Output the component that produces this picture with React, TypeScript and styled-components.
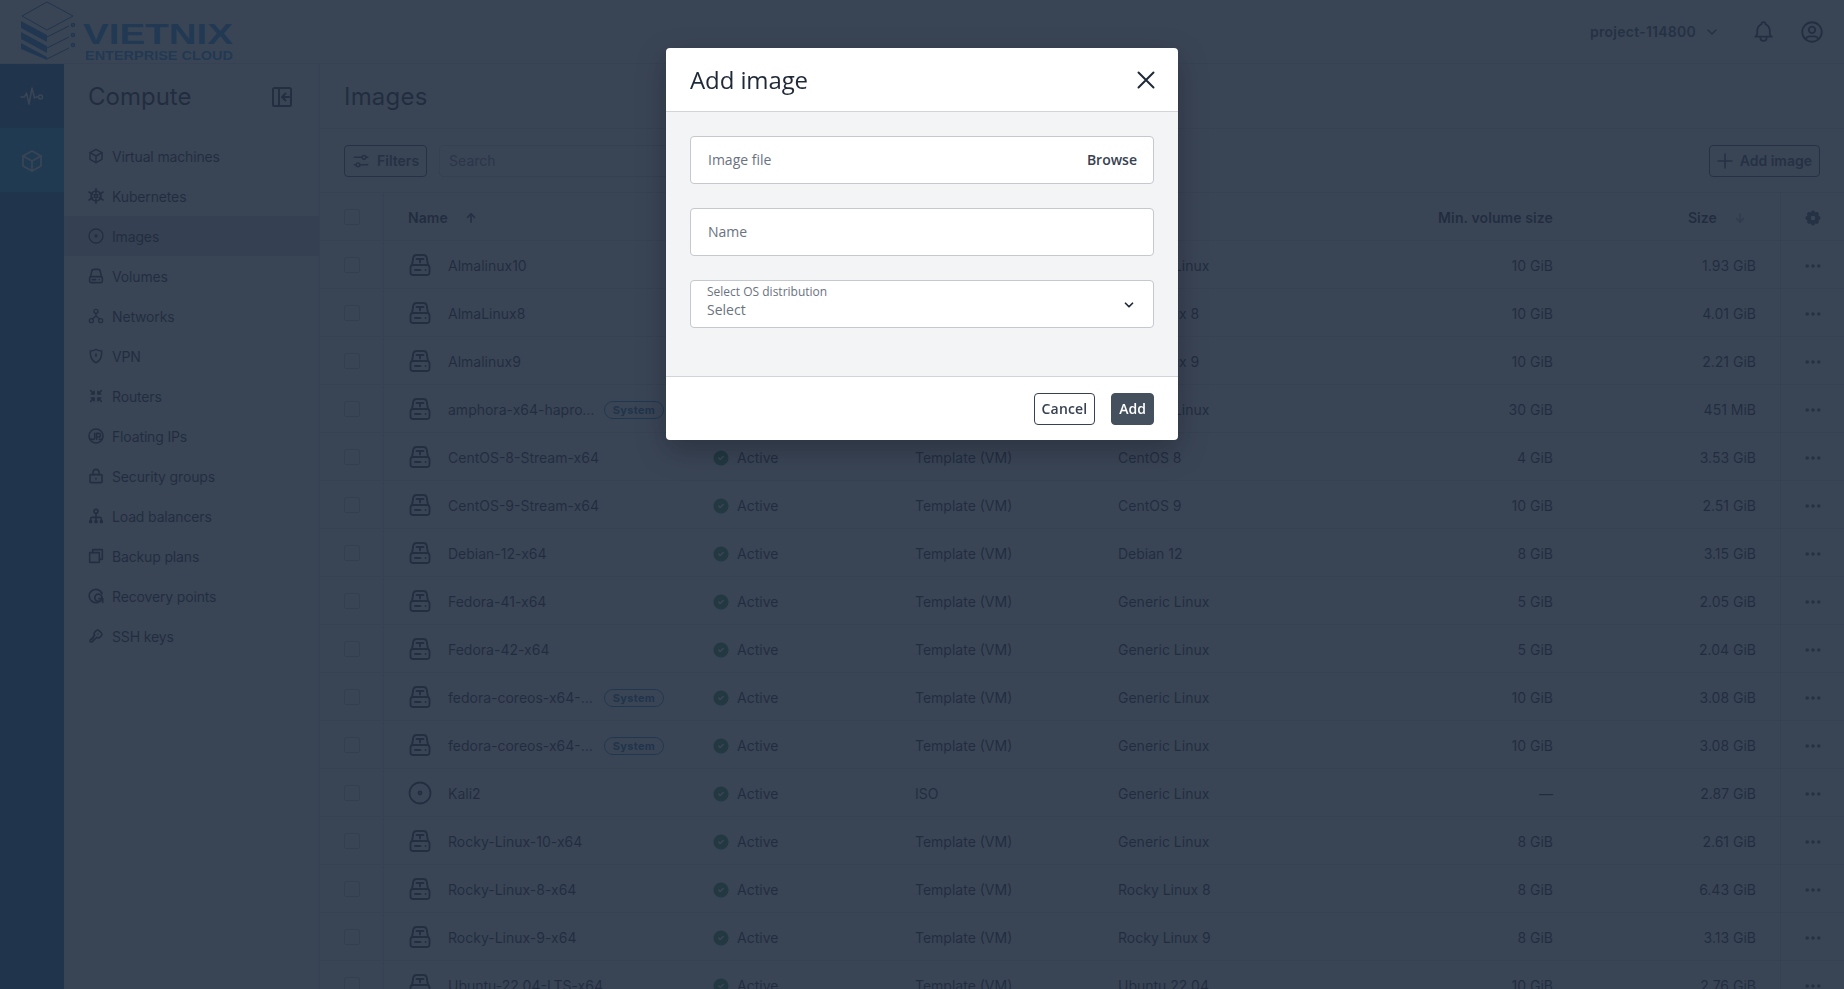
import React from "react";
import styled, { createGlobalStyle } from "styled-components";
import {
  TbArrowDown,
  TbArrowUp,
  TbBell,
  TbChevronDown,
  TbCircleCheckFilled,
  TbDots,
  TbKey,
  TbSettingsFilled,
  TbUserCircle,
} from "react-icons/tb";

const GlobalStyle = createGlobalStyle`
  html, body {
    margin: 0;
    padding: 0;
    height: 100%;
    overflow: hidden;
    background: #fff;
  }
  * {
    box-sizing: border-box;
  }
`;

const Page = styled.div`
  width: 1844px;
  height: 989px;
  overflow: hidden;
  display: flex;
  flex-direction: column;
  font-family: Inter, "Liberation Sans", sans-serif;
  font-size: 14px;
  color: #111827;
`;

// top bar
const TopBar = styled.header`
  height: 64px;
  flex: none;
  display: flex;
  align-items: center;
  justify-content: space-between;
  border-bottom: 1px solid #dfe2e7;
  padding: 0 19px 0 20px;
`;

const Logo = styled.svg`
  width: 216px;
  height: 63px;
  display: block;
`;

const TopActions = styled.div`
  display: flex;
  align-items: center;
  color: #1f2937;
  svg {
    display: block;
  }
`;

const Project = styled.div`
  display: flex;
  align-items: center;
  font-weight: 600;
  letter-spacing: 0.25px;
  gap: 8px;
  margin-right: 31px;
  color: #374151;
`;

const BellWrap = styled.div`
  margin-right: 23px;
`;

const Body = styled.div`
  flex: 1;
  display: flex;
  min-height: 0;
`;

// left rail
const Rail = styled.nav`
  width: 64px;
  flex: none;
  background: #00649a;
`;

const RailItem = styled.div<{ $active?: boolean }>`
  height: 64px;
  display: flex;
  align-items: center;
  justify-content: center;
  padding-top: 2px;
  background: ${(p) => (p.$active ? "#0098e0" : "transparent")};
  color: #fff;
`;

// section nav
const SideNav = styled.aside`
  width: 256px;
  flex: none;
  border-right: 1px solid #dfe2e7;
`;

const SideHead = styled.div`
  height: 64px;
  display: flex;
  align-items: center;
  justify-content: space-between;
  padding: 0 25px 0 24px;
  margin-bottom: 8px;
  color: #1f2937;
  svg {
    margin-top: 2px;
  }
`;

const SideTitle = styled.h2`
  margin: 0;
  font-size: 24px;
  font-weight: 400;
  color: #111827;
`;

const NavItem = styled.div<{ $active?: boolean }>`
  height: 40px;
  display: flex;
  align-items: center;
  gap: 8px;
  padding-left: 24px;
  background: ${(p) => (p.$active ? "#d4d7dc" : "transparent")};
  color: #111827;
  letter-spacing: -0.15px;
  svg {
    color: #1f2937;
  }
`;

// main area
const Main = styled.main`
  flex: 1;
  min-width: 0;
`;

const TitleBar = styled.div`
  height: 65px;
  display: flex;
  align-items: center;
  padding-left: 24px;
  border-bottom: 1px solid #dfe2e7;
`;

const PageTitle = styled.h1`
  margin: 0;
  font-size: 24px;
  font-weight: 400;
  letter-spacing: 0.2px;
`;

const Toolbar = styled.div`
  display: flex;
  align-items: center;
  padding: 16px 24px 15px;
  gap: 12px;
`;

const OutlineButton = styled.button<{ $gap?: number }>`
  height: 32px;
  display: flex;
  align-items: center;
  gap: ${(p) => p.$gap ?? 6}px;
  padding: 0 7px 1px;
  background: transparent;
  border: 1px solid #374151;
  border-radius: 4px;
  color: #374151;
  font: 600 14px Inter, "Liberation Sans", sans-serif;
`;

const SearchBox = styled.div`
  width: 320px;
  height: 32px;
  display: flex;
  align-items: center;
  padding: 0 0 2px 9px;
  border: 1px solid #d1d5db;
  border-radius: 4px;
  color: #6b7280;
`;

const Spacer = styled.div`
  flex: 1;
`;

// table
const columns = "64px 305px 202px 203px 280px 203px 203px 64px";

const HeadRow = styled.div`
  display: grid;
  grid-template-columns: ${columns};
  height: 49px;
  border-top: 1px solid #dfe2e7;
  border-bottom: 1px solid #dfe2e7;
  font-weight: 600;
  letter-spacing: 0.1px;
  color: #111827;
`;

const Row = styled.div`
  display: grid;
  grid-template-columns: ${columns};
  height: 48px;
  border-bottom: 1px solid #dfe2e7;
`;

const Cell = styled.div<{ $right?: boolean; $pad?: number }>`
  display: flex;
  align-items: center;
  min-width: 0;
  justify-content: ${(p) => (p.$right ? "flex-end" : "flex-start")};
  padding: 2px ${(p) => p.$pad ?? 24}px 0;
`;

const CheckCell = styled(Cell)`
  padding: 0 0 0 24px;
  border-right: 1px solid #dfe2e7;
`;

const ActionCell = styled(Cell)`
  padding: 2px 0 0;
  justify-content: center;
  border-left: 1px solid #dfe2e7;
  color: #374151;
`;

const Check = styled.span`
  width: 16px;
  height: 16px;
  border: 1px solid #c3c8d0;
  border-radius: 2px;
`;

const NameIcon = styled.span`
  display: flex;
  flex: none;
  width: 24px;
  margin-top: -2px;
  margin-right: 16px;
  color: #1f2937;
`;

const NameText = styled.span<{ $clip?: boolean }>`
  white-space: nowrap;
  overflow: hidden;
  text-overflow: ellipsis;
  width: ${(p) => (p.$clip ? "149px" : "auto")};
`;

const Badge = styled.span`
  flex: none;
  margin-left: 7px;
  width: 60px;
  height: 18px;
  display: flex;
  align-items: center;
  justify-content: center;
  border: 1px solid #0a7fd0;
  border-radius: 9px;
  color: #075a9e;
  font-size: 11px;
  font-weight: 700;
  letter-spacing: 0.3px;
`;

const StatusIcon = styled.span`
  display: flex;
  margin-left: -1px;
  margin-right: 7px;
  color: #188a40;
`;

const SortGap = styled.span<{ $faint?: boolean }>`
  display: flex;
  margin-left: 16px;
  color: ${(p) => (p.$faint ? "#9ca3af" : "#374151")};
`;

// dialog
const Overlay = styled.div`
  position: fixed;
  inset: 0;
  background: rgba(36, 48, 67, 0.9);
  font-family: "Open Sans", "Noto Sans", sans-serif;
`;

const Dialog = styled.section`
  width: 512px;
  height: 392px;
  margin: 48px auto 0;
  display: flex;
  flex-direction: column;
  background: #fff;
  border-radius: 4px;
  box-shadow: 0 10px 30px rgba(0, 0, 0, 0.25);
  overflow: hidden;
`;

const DialogHead = styled.div`
  height: 64px;
  flex: none;
  display: flex;
  align-items: center;
  justify-content: space-between;
  padding: 0 20px 0 24px;
  border-bottom: 1px solid #d1d5db;
`;

const DialogTitle = styled.h3`
  margin: 0;
  font-size: 24px;
  font-weight: 400;
  letter-spacing: -0.1px;
  color: #1f2937;
`;

const CloseIcon = styled.span`
  display: flex;
  color: #1f2937;
`;

const DialogBody = styled.div`
  flex: 1;
  background: #f3f4f6;
  padding: 24px;
  display: flex;
  flex-direction: column;
  gap: 24px;
`;

const Field = styled.div`
  height: 48px;
  display: flex;
  align-items: center;
  justify-content: space-between;
  padding: 0 16px 2px 17px;
  background: #fff;
  border: 1px solid #c4c8cf;
  border-radius: 4px;
  font-size: 14px;
  color: #6b7280;
`;

const Browse = styled.span`
  font-weight: 600;
  color: #374151;
`;

const SelectText = styled.div`
  display: flex;
  flex-direction: column;
  line-height: 19px;
  margin: -4px 0 0 -1px;
  color: #6b7280;
  small {
    font-size: 12px;
    line-height: 16px;
    color: #6b7280;
  }
`;

const SelectChevron = styled.span`
  display: flex;
  margin: 3px 1px 0 0;
  color: #1f2937;
`;

const DialogFoot = styled.div`
  height: 64px;
  flex: none;
  display: flex;
  align-items: center;
  justify-content: flex-end;
  gap: 16px;
  padding: 0 24px;
  border-top: 1px solid #d1d5db;
`;

const FootButton = styled.button<{ $primary?: boolean }>`
  height: 32px;
  padding: 0 7px;
  border-radius: 4px;
  border: 1px solid ${(p) => (p.$primary ? "#45505e" : "#374151")};
  background: ${(p) => (p.$primary ? "#45505e" : "#fff")};
  color: ${(p) => (p.$primary ? "#fff" : "#374151")};
  font: 600 14px "Open Sans", "Noto Sans", sans-serif;
  letter-spacing: ${(p) => (p.$primary ? "0" : "0.15px")};
`;

const Svg: React.FC<{ size?: number; width?: number; children: React.ReactNode }> = ({ size = 16, width = 2, children }) => (
  <svg width={size} height={size} viewBox="0 0 24 24" fill="none" stroke="currentColor" strokeWidth={width} strokeLinecap="round" strokeLinejoin="round">
    {children}
  </svg>
);

const HeartbeatIcon = () => (
  <Svg size={24} width={1.5}>
    <path d="M1 12h3.5l2-4 2.5 11 3-16 2.5 10 1.5-1h2.5" />
    <circle cx="20.5" cy="12" r="2" />
  </Svg>
);
const BoxIcon = ({ size = 16, width = 2.2 }: { size?: number; width?: number }) => (
  <Svg size={size} width={width}>
    <path d="M12 2l9 5v10l-9 5-9-5V7z" />
    <path d="M3 7l9 5 9-5M12 12v10" />
  </Svg>
);
const HelmIcon = () => (
  <Svg width={2.4}>
    <circle cx="12" cy="12" r="7.5" />
    <circle cx="12" cy="12" r="2.5" />
    <path d="M12 1v6M12 17v6M1.5 6l5.5 3.5M17 14.5l5.5 3.5M1.5 18l5.5-3.5M17 9.500l5.500-3.500" />
  </Svg>
);
const DiscIcon = ({ size = 16, width = 2 }: { size?: number; width?: number }) => (
  <Svg size={size} width={width}>
    <circle cx="12" cy="12" r="10.500" />
    <circle cx="12" cy="12" r="1.500" />
  </Svg>
);
const VolumeIcon = () => (
  <Svg width={2.4}>
    <path d="M4 13l1.500-8a3.500 3.500 0 0 1 3.500-3h6a3.500 3.500 0 0 1 3.500 3l1.500 8" />
    <rect x="2.500" y="13" width="19" height="9" rx="2" />
    <path d="M6.500 17.500h5M17 17.500h.01" />
  </Svg>
);
const TemplateIcon = () => (
  <Svg size={24} width={1.9}>
    <path d="M4 12l1.300-7.500A3 3 0 0 1 8.200 2h7.600a3 3 0 0 1 2.900 2.500L20 12" />
    <rect x="2.500" y="12" width="19" height="10" rx="2.500" />
    <path d="M8.500 6h7M12 6v3.500M7 17h5.500M17.500 17h.01" />
  </Svg>
);
const NetworkIcon = () => (
  <Svg width={2}>
    <circle cx="12" cy="5" r="3" />
    <circle cx="5" cy="19" r="3" />
    <circle cx="19" cy="19" r="3" />
    <path d="M12 8v4l-5.500 4.500M12 12l5.500 4.500" />
  </Svg>
);
const ShieldIcon = () => (
  <Svg width={2.4}>
    <path d="M12 2c3 1.800 5.500 2.500 8.500 2.500C21 13 18 19.500 12 22 6 19.500 3 13 3.500 4.500 6.500 4.500 9 3.800 12 2z" />
    <path d="M12 9v3.500" />
  </Svg>
);
const RouterIcon = () => (
  <Svg width={2.6}>
    <path d="M4 4l5 5M9 5v4H5M20 4l-5 5M15 5v4h4M4 20l5-5M9 19v-4H5M20 20l-5-5M15 19v-4h4" />
  </Svg>
);
const FloatingIcon = () => (
  <Svg width={2.4}>
    <circle cx="12" cy="12" r="10.500" />
    <path d="M3 17c2-1 4 1 6 0s1-3 1-9M13 17V8h3a2.500 2.500 0 0 1 0 5.500h-3M17 17c1 .5 2 .5 4-.5" />
  </Svg>
);
const LockIcon = () => (
  <Svg width={2.4}>
    <path d="M7.500 10V6.500a4.500 4.500 0 0 1 9 0V10" />
    <rect x="3" y="10" width="18" height="12" rx="1" />
    <path d="M12 15.500v1" />
  </Svg>
);
const BalancerIcon = () => (
  <Svg width={2.4}>
    <circle cx="12" cy="5" r="3" />
    <path d="M12 8v6M4 19v-3a2 2 0 0 1 2-2h12a2 2 0 0 1 2 2v3M12 14v5" />
    <circle cx="4" cy="20.500" r="1.500" fill="currentColor" />
    <circle cx="12" cy="20.500" r="1.500" fill="currentColor" />
    <circle cx="20" cy="20.500" r="1.500" fill="currentColor" />
  </Svg>
);
const BackupIcon = () => (
  <Svg width={2.4}>
    <path d="M7 7V2.500h14.500V17H17" />
    <rect x="2.500" y="7" width="14.500" height="14.500" />
  </Svg>
);
const RecoveryIcon = () => (
  <Svg width={2.6}>
    <path d="M21 8A10 10 0 1 0 21 16" />
    <path d="M21 16a5.500 5.500 0 1 0-2 3" />
    <path d="M16.500 16H22v5.500" />
  </Svg>
);
const CollapseIcon = () => (
  <Svg size={24} width={2}>
    <rect x="3" y="3" width="18" height="18" rx="1.500" />
    <path d="M9 3v18M19 12h-6M15.500 8.500L12 12l3.500 3.500" />
  </Svg>
);
const SlidersIcon = () => (
  <Svg size={18} width={2}>
    <path d="M3 7h10M19 7h2M3 17h2M11 17h10" />
    <circle cx="16" cy="7" r="2.500" />
    <circle cx="8" cy="17" r="2.500" />
  </Svg>
);
const PlusIcon = () => (
  <Svg size={16} width={2.4}>
    <path d="M1.500 12h21M12 1.500v21" />
  </Svg>
);
const CrossIcon = () => (
  <Svg size={24} width={2}>
    <path d="M4.500 4.500l15 15M19.500 4.500l-15 15" />
  </Svg>
);

const navItems = [
  { label: "Virtual machines", icon: <BoxIcon /> },
  { label: "Kubernetes", icon: <HelmIcon /> },
  { label: "Images", icon: <DiscIcon />, active: true },
  { label: "Volumes", icon: <VolumeIcon /> },
  { label: "Networks", icon: <NetworkIcon /> },
  { label: "VPN", icon: <ShieldIcon /> },
  { label: "Routers", icon: <RouterIcon /> },
  { label: "Floating IPs", icon: <FloatingIcon /> },
  { label: "Security groups", icon: <LockIcon /> },
  { label: "Load balancers", icon: <BalancerIcon /> },
  { label: "Backup plans", icon: <BackupIcon /> },
  { label: "Recovery points", icon: <RecoveryIcon /> },
  { label: "SSH keys", icon: <TbKey size={16} strokeWidth={2.4} /> },
];

type Image = { name: string; system?: boolean; type?: string; os: string; min: string; size: string };

const images: Image[] = [
  { name: "Almalinux10", os: "Generic Linux", min: "10 GiB", size: "1.93 GiB" },
  { name: "AlmaLinux8", os: "AlmaLinux 8", min: "10 GiB", size: "4.01 GiB" },
  { name: "Almalinux9", os: "AlmaLinux 9", min: "10 GiB", size: "2.21 GiB" },
  { name: "amphora-x64-haproxy-ubuntu", system: true, os: "Generic Linux", min: "30 GiB", size: "451 MiB" },
  { name: "CentOS-8-Stream-x64", os: "CentOS 8", min: "4 GiB", size: "3.53 GiB" },
  { name: "CentOS-9-Stream-x64", os: "CentOS 9", min: "10 GiB", size: "2.51 GiB" },
  { name: "Debian-12-x64", os: "Debian 12", min: "8 GiB", size: "3.15 GiB" },
  { name: "Fedora-41-x64", os: "Generic Linux", min: "5 GiB", size: "2.05 GiB" },
  { name: "Fedora-42-x64", os: "Generic Linux", min: "5 GiB", size: "2.04 GiB" },
  { name: "fedora-coreos-x64-41-amphora", system: true, os: "Generic Linux", min: "10 GiB", size: "3.08 GiB" },
  { name: "fedora-coreos-x64-42-amphora", system: true, os: "Generic Linux", min: "10 GiB", size: "3.08 GiB" },
  { name: "Kali2", type: "ISO", os: "Generic Linux", min: "—", size: "2.87 GiB" },
  { name: "Rocky-Linux-10-x64", os: "Generic Linux", min: "8 GiB", size: "2.61 GiB" },
  { name: "Rocky-Linux-8-x64", os: "Rocky Linux 8", min: "8 GiB", size: "6.43 GiB" },
  { name: "Rocky-Linux-9-x64", os: "Rocky Linux 9", min: "8 GiB", size: "3.13 GiB" },
  { name: "Ubuntu-22.04-LTS-x64", os: "Ubuntu 22.04", min: "10 GiB", size: "2.76 GiB" },
];

const VietnixLogo = () => (
  <Logo viewBox="0 0 216 63">
    <g fill="none" stroke="#075a9e" strokeWidth="1">
      <path d="M27 2l26 14-26 14L2 16z" />
      <path d="M27 37l22-11M27 48l22-11M27 59l22-11" />
    </g>
    <g fill="#0a7fd0">
      <path d="M1 21l26 14v7L1 28zM1 32l26 14v7L1 39zM1 43l26 14v3L1 49z" />
    </g>
    <g fill="none" stroke="#0a7fd0" strokeWidth="1.500">
      <circle cx="53" cy="25" r="1.500" />
      <circle cx="53" cy="35" r="1.500" />
      <circle cx="53" cy="45" r="1.500" />
    </g>
    <text x="63" y="44" fill="#0a8fe0" fontFamily="'Liberation Sans', sans-serif" fontWeight="700" fontSize="30" textLength="150" lengthAdjust="spacingAndGlyphs">
      VIETNIX
    </text>
    <text x="65" y="60" fill="#0a8fe0" fontFamily="'Liberation Sans', sans-serif" fontWeight="700" fontSize="12.500" textLength="148" lengthAdjust="spacingAndGlyphs">
      ENTERPRISE CLOUD
    </text>
  </Logo>
);

const App: React.FC = () => {
  return (
    <>
      <GlobalStyle />
      <Page>
        <TopBar>
          <VietnixLogo />
          <TopActions>
            <Project>
              project-114800
              <TbChevronDown size={16} strokeWidth={2.4} />
            </Project>
            <BellWrap>
              <TbBell size={25} strokeWidth={1.7} />
            </BellWrap>
            <TbUserCircle size={26} strokeWidth={1.7} />
          </TopActions>
        </TopBar>
        <Body>
          <Rail>
            <RailItem>
              <HeartbeatIcon />
            </RailItem>
            <RailItem $active>
              <BoxIcon size={24} width={1.7} />
            </RailItem>
          </Rail>
          <SideNav>
            <SideHead>
              <SideTitle>Compute</SideTitle>
              <CollapseIcon />
            </SideHead>
            {navItems.map((item) => (
              <NavItem key={item.label} $active={item.active}>
                {item.icon}
                {item.label}
              </NavItem>
            ))}
          </SideNav>
          <Main>
            <TitleBar>
              <PageTitle>Images</PageTitle>
            </TitleBar>
            <Toolbar>
              <OutlineButton $gap={7}>
                <SlidersIcon />
                Filters
              </OutlineButton>
              <SearchBox>Search</SearchBox>
              <Spacer />
              <OutlineButton $gap={7}>
                <PlusIcon />
                Add image
              </OutlineButton>
            </Toolbar>
            <HeadRow>
              <CheckCell>
                <Check />
              </CheckCell>
              <Cell>
                Name
                <SortGap>
                  <TbArrowUp size={14} strokeWidth={3} />
                </SortGap>
              </Cell>
              <Cell>Status</Cell>
              <Cell>Type</Cell>
              <Cell>OS</Cell>
              <Cell $right>Min. volume size</Cell>
              <Cell $right $pad={33}>
                Size
                <SortGap $faint>
                  <TbArrowDown size={14} strokeWidth={2.4} />
                </SortGap>
              </Cell>
              <ActionCell>
                <TbSettingsFilled size={18} />
              </ActionCell>
            </HeadRow>
            {images.map((img) => (
              <Row key={img.name}>
                <CheckCell>
                  <Check />
                </CheckCell>
                <Cell>
                  <NameIcon>{img.type === "ISO" ? <DiscIcon size={24} width={1.8} /> : <TemplateIcon />}</NameIcon>
                  <NameText $clip={img.system}>{img.name}</NameText>
                  {img.system && <Badge>System</Badge>}
                </Cell>
                <Cell>
                  <StatusIcon>
                    <TbCircleCheckFilled size={18} />
                  </StatusIcon>
                  Active
                </Cell>
                <Cell>{img.type ?? "Template (VM)"}</Cell>
                <Cell>{img.os}</Cell>
                <Cell $right>{img.min}</Cell>
                <Cell $right>{img.size}</Cell>
                <ActionCell>
                  <TbDots size={20} strokeWidth={2.4} />
                </ActionCell>
              </Row>
            ))}
          </Main>
        </Body>
      </Page>
      <Overlay>
        <Dialog>
          <DialogHead>
            <DialogTitle>Add image</DialogTitle>
            <CloseIcon>
              <CrossIcon />
            </CloseIcon>
          </DialogHead>
          <DialogBody>
            <Field>
              Image file
              <Browse>Browse</Browse>
            </Field>
            <Field>Name</Field>
            <Field>
              <SelectText>
                <small>Select OS distribution</small>
                Select
              </SelectText>
              <SelectChevron>
                <TbChevronDown size={14} strokeWidth={3} />
              </SelectChevron>
            </Field>
          </DialogBody>
          <DialogFoot>
            <FootButton>Cancel</FootButton>
            <FootButton $primary>Add</FootButton>
          </DialogFoot>
        </Dialog>
      </Overlay>
    </>
  );
};

export default App;
